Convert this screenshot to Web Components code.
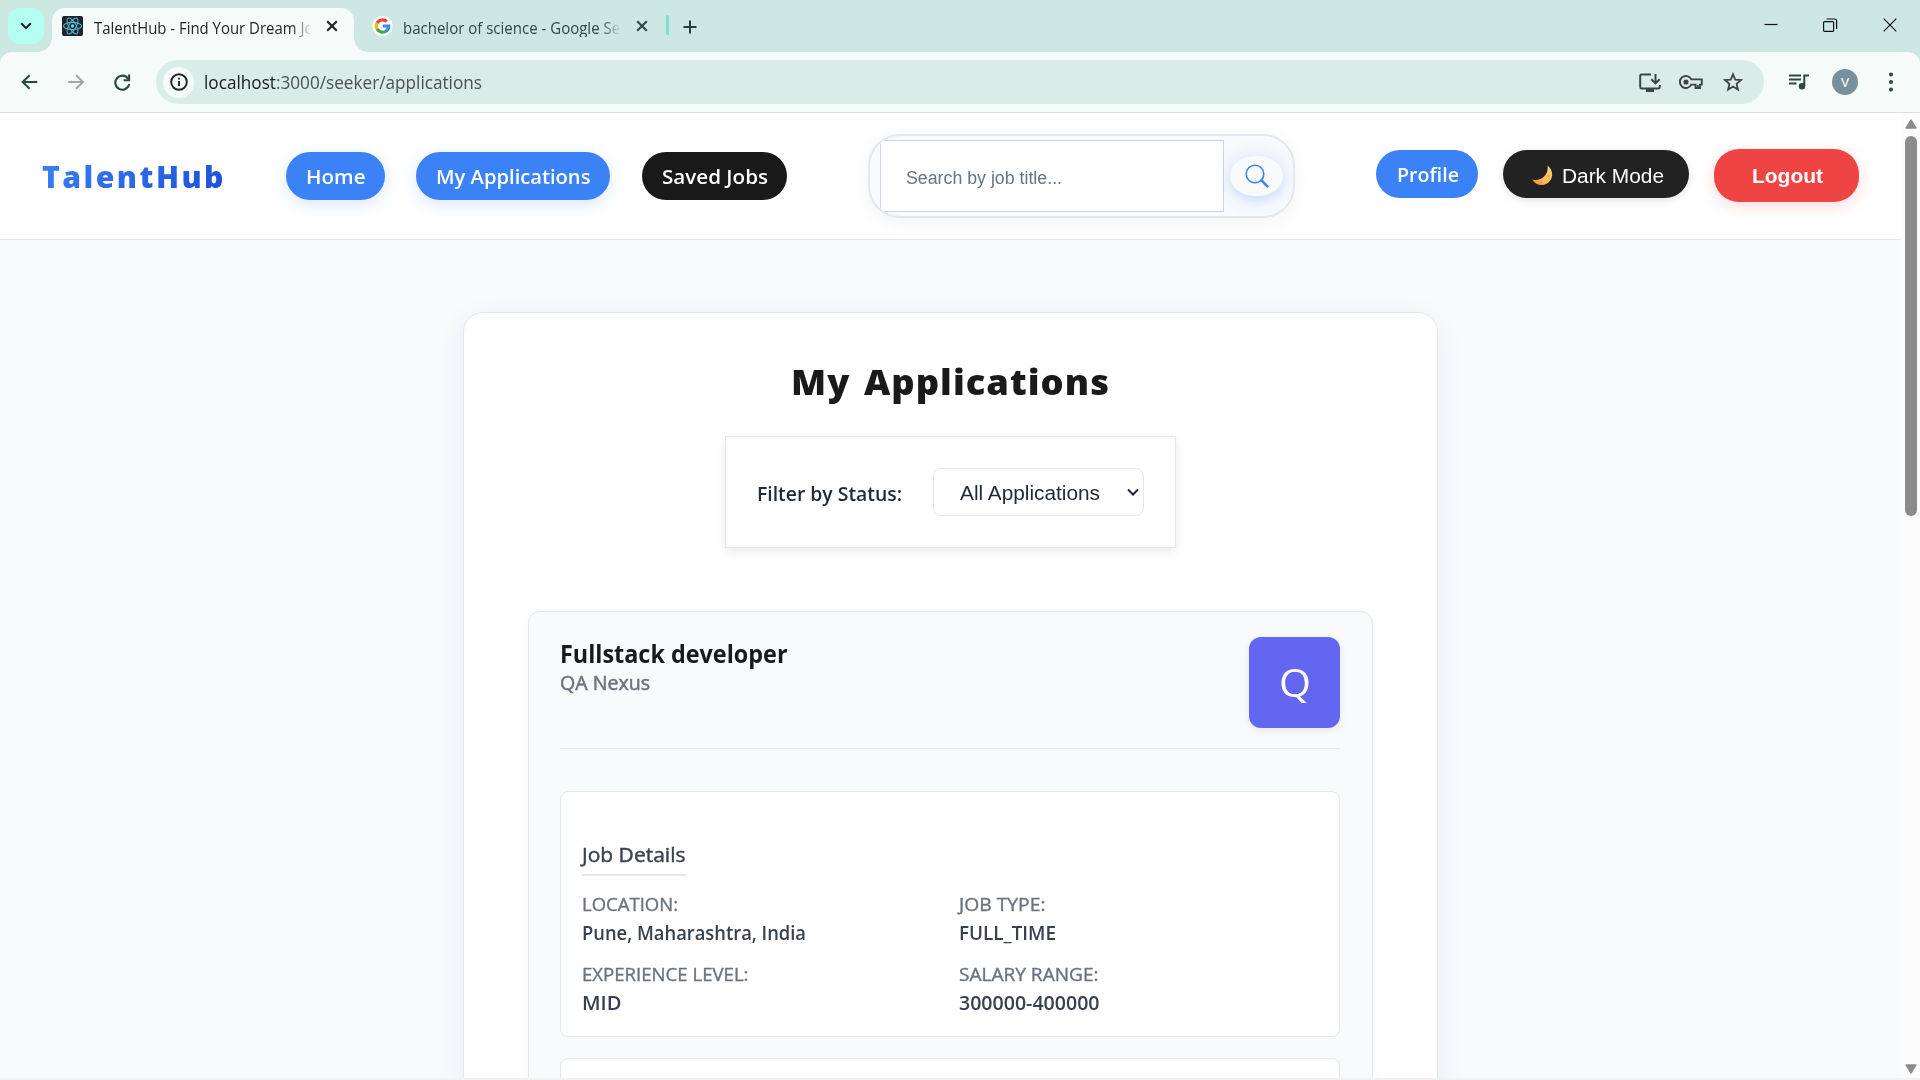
<!DOCTYPE html>
<html lang="en">
<head>
<meta charset="utf-8">
<title>TalentHub - Find Your Dream Job</title>
<style>
html,body{margin:0;height:100%;overflow:hidden;background:#f8fafc}
body{font-family:"Open Sans","Noto Sans",sans-serif}
</style>
</head>
<body>
<app-window></app-window>
<script>
const define = (name, html, setup) => customElements.define(name, class extends HTMLElement {
  connectedCallback() {
    if (this.shadowRoot) return;
    const root = this.attachShadow({mode: 'open'});
    const t = document.createElement('template');
    t.innerHTML = typeof html === 'function' ? html(this) : html;
    root.appendChild(t.content.cloneNode(true));
    if (setup) setup(this, root);
  }
});

/* One line of text set to an exact advance width (attribute w). */
define('fit-text', `<style>
:host{display:block;white-space:nowrap;flex:none}
span{display:inline-block;transform-origin:0 50%;vertical-align:top}
:host([gradient]) span{color:transparent;background:linear-gradient(135deg,#3b82f6,#1d4ed8);-webkit-background-clip:text;background-clip:text}
</style><span><slot></slot></span>`, (el, root) => {
  const s = root.querySelector('span'), w = parseFloat(el.getAttribute('w'));
  el.style.width = w + 'px';
  const n = s.getBoundingClientRect().width;
  if (n) s.style.transform = `scaleX(${w / n})`;
});

/* ---------- browser chrome ---------- */
define('browser-tab', el => `<style>
:host{display:flex;align-items:center;position:relative;height:44px;box-sizing:border-box;color:#2f4a45;font-size:16px;line-height:24px}
:host([active]){background:#f5fbf9;border-radius:13px 13px 0 0;color:#1d2423}
:host([active])::before,:host([active])::after{content:"";position:absolute;bottom:0;width:14px;height:14px}
:host([active])::before{right:100%;background:radial-gradient(circle at 0 0,transparent 13.5px,#f5fbf9 14px)}
:host([active])::after{left:100%;background:radial-gradient(circle at 100% 0,transparent 13.5px,#f5fbf9 14px)}
.icon{width:21px;height:20px;margin:-8px 10.500px 0 0;flex:none}
.title{width:217px;overflow:hidden;height:21px;line-height:24px;margin-top:-8px;-webkit-mask-image:linear-gradient(90deg,#000 198px,transparent 218px);mask-image:linear-gradient(90deg,#000 198px,transparent 218px)}
.x{width:12px;height:12px;margin:-8px 0 0 15.5px;flex:none}
</style><div class="icon"><slot name="icon"></slot></div>
<div class="title"><fit-text w="${el.getAttribute('tw')}">${el.getAttribute('label')}</fit-text></div>
<svg class="x" viewBox="0 0 12 12" fill="none" stroke="currentColor" stroke-width="2.1"><path d="M1.2 1.2l9.6 9.6M10.8 1.2l-9.6 9.6"/></svg>`);

define('tab-strip', `<style>
:host{display:flex;height:52px;background:#cde8e2;padding-top:8px;box-sizing:border-box}
.menu{width:36px;height:36px;border-radius:12px;background:#b5fef2;margin:0 8px;display:flex;align-items:center;justify-content:center}
browser-tab.a{width:302px;padding-left:10px}
browser-tab.b{width:312px;padding-left:17.500px}
.sep{width:3px;height:20px;background:#82dcd0;border-radius:2px;margin-top:7px}
.plus{margin:12px 0 0 13.500px;width:14px;height:14px}
.win{margin-left:auto;display:flex;padding:10px 23px 0 0;gap:45px;color:#111}
svg{display:block}
</style>
<div class="menu"><svg width="12" height="8" viewBox="0 0 12 8" fill="none" stroke="#12201e" stroke-width="2"><path d="M1.2 1.3L6 6.1l4.800-4.800"/></svg></div>
<browser-tab class="a" active label="TalentHub - Find Your Dream Job" tw="228.500">
<svg slot="icon" width="21" height="20" viewBox="0 0 21 20"><rect width="21" height="20" rx="2" fill="#20232a"/><g fill="none" stroke="#4fb3cc" stroke-width="1.100" transform="translate(10.500 10)"><ellipse rx="9" ry="3.600"/><ellipse rx="9" ry="3.600" transform="rotate(60)"/><ellipse rx="9" ry="3.600" transform="rotate(120)"/></g><circle cx="10.500" cy="10" r="1.700" fill="#61dafb"/></svg>
</browser-tab>
<browser-tab class="b" label="bachelor of science - Google Search" tw="248">
<svg slot="icon" width="21" height="20" viewBox="0 0 21 20"><circle cx="10.500" cy="10" r="10.200" fill="#fff"/><g fill="none" stroke-width="3.200"><path d="M5.100 7.200A6.200 6.200 0 0 1 14.800 5.500" stroke="#ea4335"/><path d="M5.300 13.200A6.200 6.200 0 0 1 5.100 6.900" stroke="#fbbc05"/><path d="M14.700 14.600A6.200 6.200 0 0 1 5.100 13" stroke="#34a853"/><path d="M10.800 10h5.900A6.200 6.200 0 0 1 14.300 14.900" stroke="#4285f4"/></g></svg>
</browser-tab>
<div class="sep"></div>
<svg class="plus" viewBox="0 0 14 14" stroke="#25403b" stroke-width="2"><path d="M7 .5v13M.5 7h13"/></svg>
<div class="win">
<svg width="14" height="14" viewBox="0 0 14 14" stroke="#111" stroke-width="1.200"><path d="M.5 6.500h13"/></svg>
<svg width="15" height="14" viewBox="0 0 15 14" fill="none" stroke="#111" stroke-width="1.200"><rect x=".6" y="3.600" width="10" height="9.800" rx="1"/><path d="M3.600 1h8q2 0 2 2v8"/></svg>
<svg width="14" height="14" viewBox="0 0 14 14" stroke="#111" stroke-width="1.200"><path d="M.7 1.200l12.600 12.600M13.300 1.200L.7 13.800" transform="translate(0 -.5)"/></svg>
</div>`);

define('tool-bar', `<style>
:host{display:block;background:#cde8e2}
.bar{height:60px;background:#f5fbf9;border-radius:12px 12px 0 0;border-bottom:1px solid #d5e4e0;display:flex;align-items:center;box-sizing:content-box}
svg{display:block;flex:none}
.nav{display:flex;gap:29.500px;padding-left:21px;width:135px;box-sizing:border-box}
.omni{width:1608px;height:44px;border-radius:22px;background:#daece8;display:flex;align-items:center;box-sizing:border-box;padding-left:7px;margin-left:21px;font-size:18px;line-height:27px;color:#161c1b}
.path{color:#4a5350}
.info{width:31px;height:31px;border-radius:50%;background:#f5fbf9;display:flex;align-items:center;justify-content:center;margin-right:10px}
.acts{display:flex;align-items:center;margin-left:auto;padding-right:21px;gap:18px}
.acts svg:last-child{margin-left:2px}
.right{display:flex;align-items:center;margin-left:25px}
.av{width:26px;height:26px;border-radius:50%;background:#78909c;color:#fff;font:400 13.500px/26px Roboto,sans-serif;text-align:center;margin:0 31px 0 23px}
</style><div class="bar">
<div class="nav">
<svg width="17" height="16" viewBox="0 0 17 16" fill="none" stroke="#2c4640" stroke-width="2"><path d="M16.300 8H2M8.600 1.200L1.600 8l7 6.800"/></svg>
<svg width="17" height="16" viewBox="0 0 17 16" fill="none" stroke="#9fa8a5" stroke-width="2"><path d="M.2 8H15M8 1.200L15 8l-7 6.800"/></svg>
<svg width="17" height="17" viewBox="0 0 17 17" fill="none" stroke="#2c4640" stroke-width="2.100"><path d="M14.200 4.800A7 7 0 1 0 15.200 10.100"/><path d="M15.100.5v5.700H9.600"/></svg>
</div>
<div class="omni"><div class="info"><svg width="18" height="18" viewBox="0 0 18 18" fill="none" stroke="#1c2826" stroke-width="1.900"><circle cx="9" cy="9" r="7.800"/><path d="M9 8v5M9 4.700v1.900"/></svg></div>
<fit-text w="278">localhost<span class="path">:3000/seeker/applications</span></fit-text>
<div class="acts">
<svg width="22" height="19" viewBox="0 0 22 19" fill="none" stroke="#3c4543" stroke-width="2"><path d="M12 1.500H2.500Q1.200 1.500 1.200 2.800v11.300q0 1.300 1.300 1.300h17q1.300 0 1.300-1.300V12M16.500 1v9.200M12.300 6.200l4.200 4.200 4.200-4.200"/><path d="M7 15.500h8V19H7z" fill="#3c4543" stroke="none"/></svg>
<svg width="24" height="16" viewBox="0 0 24 16" fill="none" stroke="#3c4543" stroke-width="1.900"><path d="M12.300 5.400A6 6 0 1 0 12.300 10.600H16.500V14H21V10.600H22.800V5.400z"/><circle cx="7" cy="8" r="2.600" fill="#3c4543" stroke="none"/><path d="M18.700 14v-3"/></svg>
<svg width="20" height="20" viewBox="0 0 20 20" fill="none" stroke="#3c4543" stroke-width="1.800"><path d="M10 2.300l2.200 5.300 5.800.5-4.400 3.800 1.300 5.600L10 14.500l-4.900 3 1.300-5.600L2 8.100l5.800-.5z"/></svg>
</div></div>
<div class="right">
<svg width="20" height="16" viewBox="0 0 20 16" fill="none" stroke="#2c4640" stroke-width="2"><path d="M0 1.500h12M0 5.500h12M0 9.500h7.500M15.300 12V1.500H20"/><circle cx="13" cy="12.300" r="3.200" fill="#2c4640" stroke="none"/></svg>
<div class="av">V</div>
<svg width="4" height="20" viewBox="0 0 4 20" fill="#2c4640"><circle cx="2" cy="2.400" r="2"/><circle cx="2" cy="10" r="2"/><circle cx="2" cy="17.400" r="2"/></svg>
</div></div>`);

define('page-scrollbar', `<style>
:host{display:flex;flex-direction:column;align-items:center;width:19px;background:#fcfcfc;flex:none;padding:6px 0 4px 1px;box-sizing:border-box}
.thumb{width:12px;height:380px;border-radius:6px;background:#8b8b8b;margin-top:7px}
.down{margin-top:auto}
svg{display:block}
</style><svg width="12" height="10" viewBox="0 0 12 10"><path d="M6 1.200L10.800 9H1.200z" fill="#8b8b8b" stroke="#8b8b8b" stroke-width="1.600" stroke-linejoin="round"/></svg>
<div class="thumb"></div>
<svg class="down" width="12" height="10" viewBox="0 0 12 10"><path d="M6 8.800L10.800 1H1.200z" fill="#8b8b8b" stroke="#8b8b8b" stroke-width="1.600" stroke-linejoin="round"/></svg>`);

/* ---------- site header ---------- */
define('pill-button', el => `<style>
:host{display:flex;align-items:center;justify-content:center;height:48px;border-radius:25px;background:#3b82f6;color:#fff;font-size:20px;font-weight:600;line-height:28px;flex:none;box-sizing:border-box;padding:1px 0 0 1px;width:${el.getAttribute('width')}px}
:host([glow]){box-shadow:0 4px 16px rgba(59,130,246,.2)}
:host([kind=ink]){background:#191919}
:host([kind=dark]){background:#222;font:400 20px/28px "Liberation Sans",Arial,sans-serif;box-shadow:0 2px 8px rgba(0,0,0,.12);padding:3px 0 0 4px}
:host([kind=red]){background:#ef4444;height:53px;border-radius:25px;font:700 20px/28px "Liberation Sans",Arial,sans-serif;box-shadow:0 4px 16px rgba(239,68,68,.2)}
</style><slot name="icon"></slot><fit-text w="${el.getAttribute('tw')}"><slot></slot></fit-text>`);

define('search-box', `<style>
:host{display:flex;width:427px;height:84px;box-sizing:border-box;border:2px solid #e2e8f0;border-radius:32px;background:#f8fafc;overflow:hidden;box-shadow:0 4px 20px rgba(0,0,0,.05);padding:4px 0 0 10px;flex:none}
.in{width:344px;height:72px;box-sizing:border-box;border:1px solid #c7d2fe;background:#fff;padding:24px 0 0 25px;font:17.600px/26px "Liberation Sans",Arial,sans-serif;color:#64748b}
.go{width:53px;height:40px;margin:16px 0 0 6px;border-radius:25px/20px;background:#f8fafc;box-shadow:0 2px 20px rgba(59,130,246,.2),0 4px 8px rgba(59,130,246,.1);display:flex;align-items:center;justify-content:center}
</style><div class="in"><fit-text w="156">Search by job title...</fit-text></div>
<div class="go"><svg width="24" height="24" viewBox="0 0 24 24" fill="none" stroke="#3b82f6"><circle cx="10" cy="10" r="8.800" stroke-width="1.600"/><path d="M16.400 16.400l6 6" stroke-width="2.600" stroke-linecap="round"/></svg></div>`);

define('site-header', `<style>
:host{display:flex;align-items:flex-start;height:127px;box-sizing:border-box;background:#fff;border-bottom:1px solid #e2e8f0;flex:none;padding-left:42px}
.logo{margin:41px 60px 0 0;font-size:30.500px;line-height:44px;font-weight:800;letter-spacing:2.500px}
nav{display:flex;gap:31.500px;padding-top:39px}
nav pill-button:nth-child(2){margin:0 .5px 0 -.5px}
search-box{margin:21px 81px 0 81px}
.acts{display:flex;align-items:flex-start;gap:25px;padding-top:37px}
.acts pill-button[kind=red]{margin-top:-1px}
svg{display:block;margin-right:9px}
</style>
<div class="logo"><fit-text w="184" gradient>TalentHub</fit-text></div>
<nav><pill-button width="99" tw="59.500" glow>Home</pill-button><pill-button width="194" tw="154.500" glow>My Applications</pill-button><pill-button width="145" tw="106" kind="ink">Saved Jobs</pill-button></nav>
<search-box></search-box>
<div class="acts"><pill-button width="102" tw="62">Profile</pill-button>
<pill-button width="186" tw="102" kind="dark"><svg slot="icon" width="21" height="21" viewBox="0 0 21 21"><defs><linearGradient id="m" x1="1" y1="0" x2="0" y2="1"><stop offset="0" stop-color="#ffd27a"/><stop offset=".5" stop-color="#fdc05c"/><stop offset="1" stop-color="#f08a3c"/></linearGradient></defs><path d="M15.500.5C19.500 3.500 22 9.500 18.500 15 14.500 21.500 4.500 22 .3 14.500 8.500 17 17 10.500 15.500.5z" fill="url(#m)"/><circle cx="9" cy="17.500" r="1.200" fill="#e9974c"/><circle cx="16.500" cy="11" r="1.300" fill="#f0a955"/></svg>Dark Mode</pill-button>
<pill-button width="145" tw="71" kind="red">Logout</pill-button></div>`);

/* ---------- page content ---------- */
define('status-filter', `<style>
:host{display:flex;width:451px;height:112px;box-sizing:border-box;border:1px solid #e5e7eb;background:#fff;box-shadow:0 4px 10px rgba(0,0,0,.08);align-items:center;padding-left:31px;font-size:20px;font-weight:600;line-height:28px;color:#1f2937}
.l{padding-top:3px}
.sel{width:211px;height:48px;box-sizing:border-box;border:1px solid #e5e7eb;border-radius:8px;margin-left:31px;display:flex;align-items:center;padding:0 4px 0 26px;justify-content:space-between;font:400 20px/28px "Liberation Sans",Arial,sans-serif;color:#1f2937}
.sel fit-text{padding-top:2px}
</style><div class="l"><fit-text w="145">Filter by Status:</fit-text></div>
<div class="sel"><fit-text w="140">All Applications</fit-text><svg width="12" height="8" viewBox="0 0 12 8" fill="none" stroke="#1f2937" stroke-width="2"><path d="M1 1.500l5 5 5-5"/></svg></div>`);

define('detail-item', el => `<style>
:host{display:block;height:70px;font-size:17.600px;line-height:28px;color:#6b7280}
.k{-webkit-text-stroke:.35px currentColor}
.v{font-size:19.200px;line-height:28px;font-weight:600;color:#374151;margin-top:1px}
</style><div class="k"><fit-text w="${el.getAttribute('lw')}">${el.getAttribute('label')}</fit-text></div><div class="v"><fit-text w="${el.getAttribute('vw')}"><slot></slot></fit-text></div>`);

define('detail-section', `<style>
:host{display:block;box-sizing:border-box;border:1px solid #e2e8f0;border-radius:8px;background:#fff;padding:49px 21px 0}
.h{display:inline-block;border-bottom:2px solid #e5e7eb;font-size:19.600px;line-height:28px;-webkit-text-stroke:.4px currentColor;color:#374151;padding-bottom:5px;vertical-align:top}
.grid{display:grid;grid-template-columns:377px 1fr;padding-top:14px}
</style><div class="h"><fit-text w="103.500"><slot name="title"></slot></fit-text></div><div class="grid"><slot></slot></div>`);

define('application-card', `<style>
:host{display:block;width:845px;height:900px;box-sizing:border-box;border:1px solid #e2e8f0;border-radius:12px;background:#f8fafc;padding:25px 32px 0 31px;box-shadow:0 2px 12px rgba(0,0,0,.03)}
.top{display:flex;justify-content:space-between;height:112px;box-sizing:border-box;border-bottom:1px solid #e2e8f0}
.t{font-size:25.500px;font-weight:700;line-height:32px;color:#1a1a1a}
.c{font-size:19.300px;line-height:27px;color:#6b7280;-webkit-text-stroke:.5px currentColor}
.logo{width:91px;height:91px;border-radius:12px;background:#6366f1;box-shadow:0 2px 8px rgba(0,0,0,.08);color:#fff;font-size:39px;line-height:89px;display:flex;justify-content:center}
.first{height:246px;margin-top:42px}
.second{height:180px;margin-top:21px}
</style><div class="top"><div><div class="t"><fit-text w="227.500">Fullstack developer</fit-text></div><div class="c"><fit-text w="90">QA Nexus</fit-text></div></div><div class="logo"><fit-text w="32">Q</fit-text></div></div>
<detail-section class="first"><span slot="title">Job Details</span>
<detail-item label="LOCATION:" lw="96" vw="224">Pune, Maharashtra, India</detail-item>
<detail-item label="JOB TYPE:" lw="86.500" vw="97">FULL_TIME</detail-item>
<detail-item label="EXPERIENCE LEVEL:" lw="166.500" vw="39.500">MID</detail-item>
<detail-item label="SALARY RANGE:" lw="139.500" vw="140.500">300000-400000</detail-item>
</detail-section>
<detail-section class="second"></detail-section>`);

define('app-window', `<style>
:host{display:flex;flex-direction:column;width:1920px;height:1080px;overflow:hidden}
.view{display:flex;height:965px;flex:none}
.page{width:1901px;height:965px;overflow:hidden;background:#f8fafc;display:flex;flex-direction:column;align-items:center}
site-header{width:100%}
main{width:975px;height:1200px;flex:none;box-sizing:border-box;background:#fff;border:1px solid #e2e8f0;border-radius:20px;margin-top:72px;box-shadow:0 8px 32px rgba(30,41,90,.06);display:flex;flex-direction:column;align-items:center}
h1{margin:42px 0 27px;font-size:35px;line-height:54px;font-weight:800;letter-spacing:1px;word-spacing:3px;color:#1a1a1a}
application-card{margin-top:63px}
.foot{height:2px;background:#f2f2f2}
</style><tab-strip></tab-strip><tool-bar></tool-bar>
<div class="view"><div class="page"><site-header></site-header>
<main><h1><fit-text w="319">My Applications</fit-text></h1><status-filter></status-filter><application-card></application-card></main></div>
<page-scrollbar></page-scrollbar></div><div class="foot"></div>`);
</script>
</body>
</html>
